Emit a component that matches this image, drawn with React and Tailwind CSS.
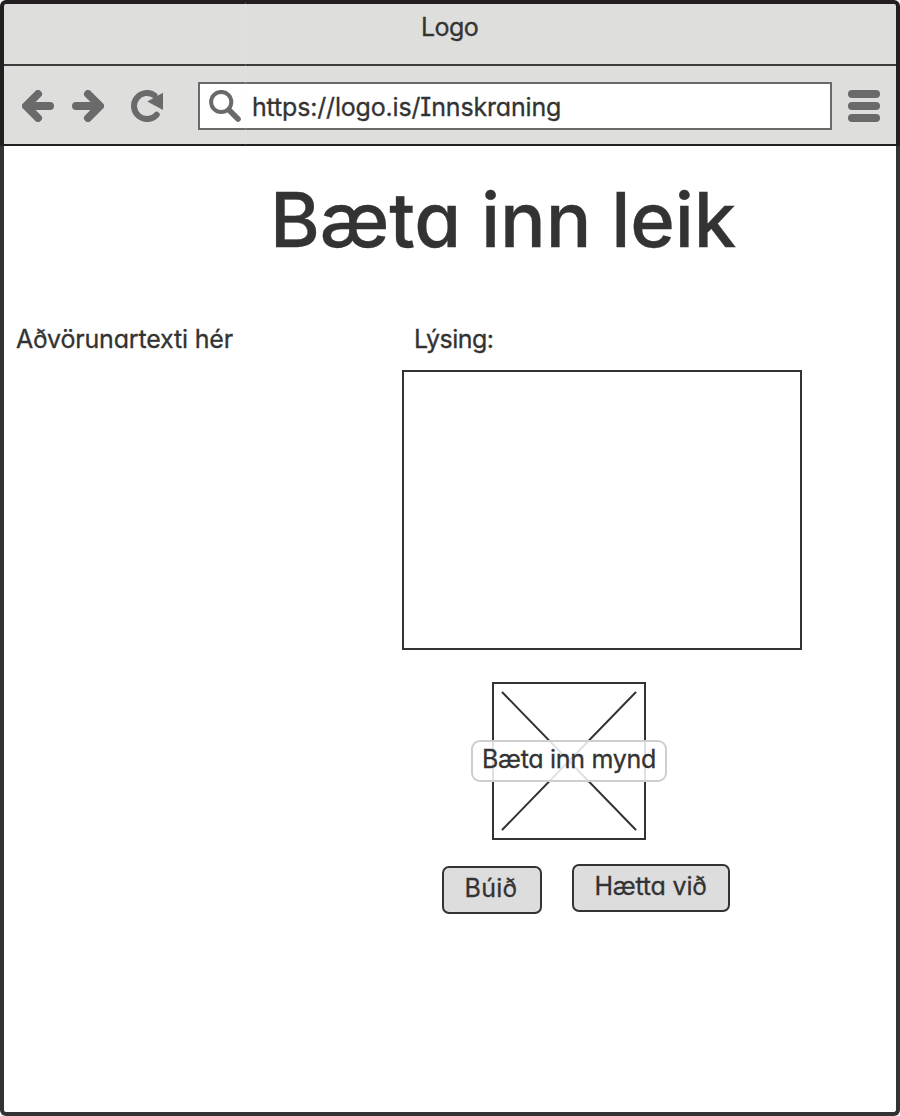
const inter = "font-['Inter','Noto_Sans',sans-serif] [font-feature-settings:'cv11','cv08']";

function BackArrow({ className = '' }) {
  return (
    <svg viewBox="0 0 32 32" className={`size-8 ${className}`} fill="none" stroke="#6a6a6a" strokeWidth="8" strokeLinecap="round" strokeLinejoin="round">
      <path d="M16 4 4 16 16 28M6 16H28" />
    </svg>
  );
}

function Reload() {
  return (
    <svg viewBox="0 0 32 32" className="ml-[27px] size-8">
      <path d="M25.7 24.65A13 13 0 1 1 23.5 5.35" fill="none" stroke="#6a6a6a" strokeWidth="6" strokeLinecap="round" />
      <path d="M32 2.7V20L16.3 11.6Z" fill="#6a6a6a" />
    </svg>
  );
}

function Search() {
  return (
    <svg viewBox="0 0 32 32" className="size-8" fill="none" stroke="#6a6a6a">
      <circle cx="12.2" cy="12" r="10.1" strokeWidth="4" />
      <path d="M20.5 20.5 29 29" strokeWidth="5.6" strokeLinecap="round" />
    </svg>
  );
}

function Header() {
  return (
    <header className="relative h-[146px] rounded-t-[6px] border-x-4 border-t-4 border-b-2 border-[#231f20] bg-[#dededc]">
      <div className="flex h-[62px] justify-center border-b-2 border-[#3c3c3c] pt-[7px]">
        <span className="pr-px text-[25px] leading-8 tracking-[-0.6px]">Logo</span>
      </div>
      <div className="flex h-[80px] items-center pr-4 pl-[18px]">
        <BackArrow />
        <BackArrow className="ml-[18px] rotate-180" />
        <Reload />
        <div className="ml-[35px] flex h-12 w-[634px] items-center border-2 border-[#6a6a6a] bg-white pl-[9px]">
          <Search />
          <span className="ml-[11px] pt-0.5 text-[25px] leading-8 tracking-[-0.17px] whitespace-nowrap">https://logo.is/Innskraning</span>
        </div>
        <div className="ml-4 flex w-8 flex-col gap-1">
          <i className="h-2 rounded-full bg-[#6a6a6a]" />
          <i className="h-2 rounded-full bg-[#6a6a6a]" />
          <i className="h-2 rounded-full bg-[#6a6a6a]" />
        </div>
      </div>
      <div className="absolute -top-0.5 left-[241px] h-[143px] w-px bg-[#eee]/20" />
    </header>
  );
}

function ImagePicker() {
  return (
    <div className="relative mt-8 ml-[90px] h-[158px] w-[154px] border-2 border-[#333]">
      <svg viewBox="0 0 150 154" className="h-[154px] w-[150px]" stroke="#333" strokeWidth="2" strokeLinecap="round">
        <path d="M8.5 8.5 141.5 145.5M141.5 8.5 8.5 145.5" />
      </svg>
      <button className="absolute top-14 left-[-23px] h-[42px] w-[196px] rounded-[9px] border-2 border-[#cecece] bg-white/85 pb-[5px] text-[25px] leading-8 tracking-[-0.3px] whitespace-nowrap">
        Bæta inn mynd
      </button>
    </div>
  );
}

export default function App() {
  return (
    <div className={`flex h-[1116px] w-[900px] flex-col bg-white text-[#333] [-webkit-text-stroke:0.3px_#333] ${inter}`}>
      <Header />
      <main className="flex-1 rounded-b-[6px] border-x-4 border-b-4 border-[#333]">
        <h1 className="pt-[25px] pl-[266px] text-[76px] leading-[96px] font-medium tracking-[-0.15px] whitespace-nowrap">Bæta inn leik</h1>
        <div className="mt-14 flex">
          <p className="w-[398px] pl-3 text-[25px] leading-8 tracking-[-0.17px] whitespace-nowrap">Aðvörunartexti hér</p>
          <section>
            <label className="block pl-3 text-[25px] leading-8 tracking-[-0.5px]">Lýsing:</label>
            <textarea className="mt-[15px] block h-[280px] w-[400px] resize-none border-2 border-[#333] outline-none" />
            <ImagePicker />
            <div className="mt-6 ml-10 flex items-start gap-[30px]">
              <button className="mt-0.5 h-12 w-[100px] rounded-[7px] border-2 border-[#333] bg-[#ddd] pr-0.5 pb-[5px] text-[25px] leading-8 tracking-[0.3px]">Búið</button>
              <button className="h-12 w-[158px] rounded-[7px] border-2 border-[#333] bg-[#ddd] pr-[7px] pb-[5px] pl-1.5 text-[25px] leading-8 tracking-[-0.2px] whitespace-nowrap">Hætta við</button>
            </div>
          </section>
        </div>
      </main>
    </div>
  );
}
